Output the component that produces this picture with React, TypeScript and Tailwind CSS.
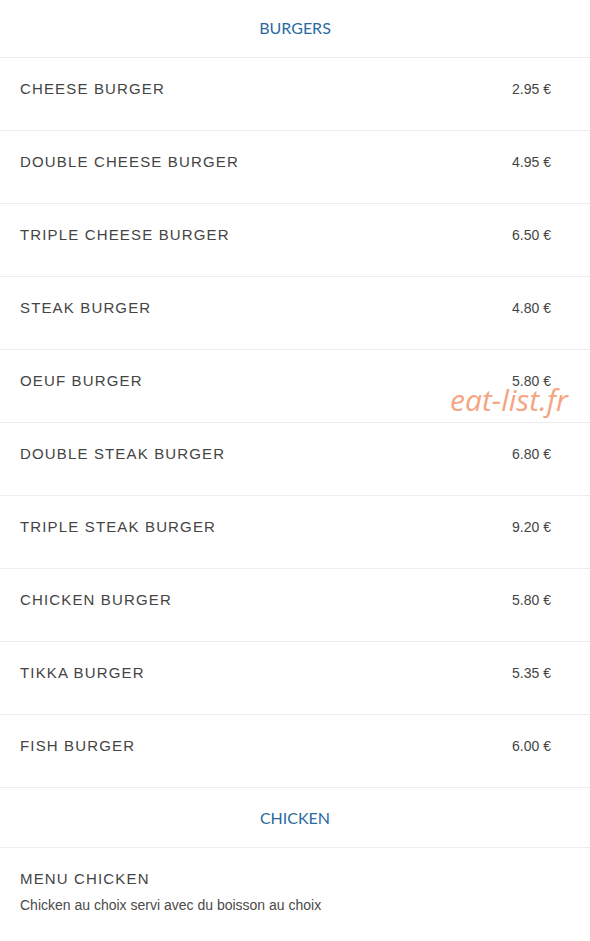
const burgers = [
  { name: 'CHEESE BURGER', price: '2.95 €' },
  { name: 'DOUBLE CHEESE BURGER', price: '4.95 €' },
  { name: 'TRIPLE CHEESE BURGER', price: '6.50 €' },
  { name: 'STEAK BURGER', price: '4.80 €' },
  { name: 'OEUF BURGER', price: '5.80 €' },
  { name: 'DOUBLE STEAK BURGER', price: '6.80 €' },
  { name: 'TRIPLE STEAK BURGER', price: '9.20 €' },
  { name: 'CHICKEN BURGER', price: '5.80 €' },
  { name: 'TIKKA BURGER', price: '5.35 €' },
  { name: 'FISH BURGER', price: '6.00 €' },
];

function SectionTitle({ label }: { label: string }) {
  return (
    <div className="h-[60px] flex items-center justify-center border-b border-[#ececec]">
      <h2 className="font-['Lato',sans-serif] text-[16px] text-[#2b6aa0]">{label}</h2>
    </div>
  );
}

function MenuRow({ name, price }: { name: string; price: string }) {
  return (
    <div className="h-[73px] flex items-start justify-between pl-5 pr-[39px] pt-5 border-b border-[#ececec]">
      <span className="font-['Liberation_Sans',Arial,sans-serif] text-[15px] leading-[21px] tracking-[1.15px] text-[#444]">
        {name}
      </span>
      <span className="font-['Liberation_Sans',Arial,sans-serif] text-[14px] leading-[21px] text-[#444] pt-[1px]">
        {price}
      </span>
    </div>
  );
}

export default function App() {
  return (
    <div className="relative w-[590px] h-[941px] overflow-hidden bg-white">
      <div className="-mt-[2px]">
        <SectionTitle label="BURGERS" />
        {burgers.map((b) => (
          <MenuRow key={b.name} name={b.name} price={b.price} />
        ))}
        <SectionTitle label="CHICKEN" />
        <div className="pl-5 pt-5">
          <div className="font-['Liberation_Sans',Arial,sans-serif] text-[15px] leading-[21px] tracking-[1.15px] text-[#444]">
            MENU CHICKEN
          </div>
          <p className="font-['Liberation_Sans',Arial,sans-serif] text-[14px] leading-[20px] text-[#4a4a4a] mt-[6px]">
            Chicken au choix servi avec du boisson au choix
          </p>
        </div>
      </div>

      {/* watermark */}
      <div className="absolute left-[450px] top-[377px] font-['Open_Sans',sans-serif] italic text-[30px] text-[#f4a582] select-none">
        eat-list.fr
      </div>
    </div>
  );
}
